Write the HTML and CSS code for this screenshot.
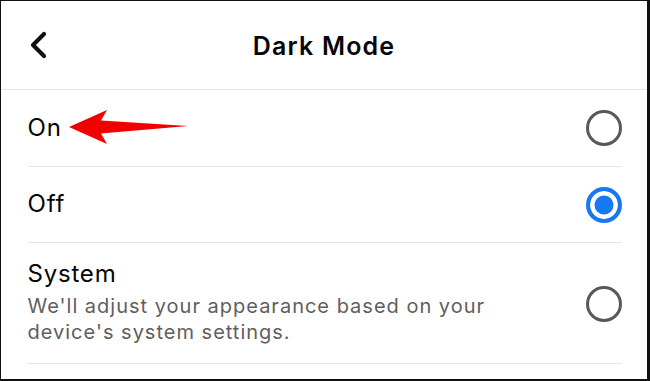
FILE: index.html
```html
<!DOCTYPE html>
<html>
<head>
<meta charset="utf-8">
<link rel="stylesheet" href="styles.css">
</head>
<body>
<div class="frame">
  <header class="header">
    <div class="back">
      <svg width="24" height="32" viewBox="0 0 24 32"><path d="M16 4 L5 15 L16 26" fill="none" stroke="#111" stroke-width="4.2" stroke-linecap="round" stroke-linejoin="round"/></svg>
    </div>
    <h1 class="title">Dark Mode</h1>
    <div></div>
  </header>
  <ul class="options">
    <li class="option">
      <div class="label"><span class="name">On</span></div>
      <span class="radio"></span>
      <svg class="arrow" width="124" height="36" viewBox="0 0 124 36"><polygon points="0,17 38,0 32,10.5 119,16 32,23.5 38,34" fill="#f20000"/></svg>
    </li>
    <li class="option">
      <div class="label"><span class="name">Off</span></div>
      <span class="radio checked"></span>
    </li>
    <li class="option tall">
      <div class="label">
        <span class="name">System</span>
        <span class="desc">We'll adjust your appearance based on your<br>device's system settings.</span>
      </div>
      <span class="radio"></span>
    </li>
  </ul>
</div>
</body>
</html>
```
FILE: styles.css
```css
* { box-sizing: border-box; }
html, body { margin: 0; padding: 0; background: #fff; }
body { font-family: Inter, "Noto Sans", "Liberation Sans", sans-serif; color: #050505; }
.frame {
  width: 650px;
  height: 381px;
  border: 1.5px solid #111;
  border-right-width: 3px;
  border-bottom-width: 2px;
  overflow: hidden;
}
.header {
  height: 89px;
  display: grid;
  grid-template-columns: 1fr auto 1fr;
  align-items: center;
  border-bottom: 1.5px solid #e6e6e6;
}
.back { padding-left: 27px; display: flex; align-items: center; }
.back svg { display: block; margin-top: 1px; }
.title {
  margin: 0;
  font-size: 25px;
  font-weight: 600;
  letter-spacing: 1.2px;
  margin-top: 1px;
}
.options { list-style: none; margin: 0; padding: 0 25px 0 26.5px; }
.option {
  position: relative;
  display: flex;
  align-items: center;
  justify-content: space-between;
  height: 76.5px;
  border-bottom: 1.5px solid #e4e4e4;
}
.option.tall { height: 121px; }
.label { display: flex; flex-direction: column; }
.name { font-size: 24px; font-weight: 400; line-height: 28px; letter-spacing: 0.8px; }
.tall .label { margin-top: -1px; }
.tall .name { margin-bottom: 5px; }
.desc { font-size: 20px; line-height: 26px; color: #5e5e60; letter-spacing: 1px; }
.radio {
  width: 36px;
  height: 36px;
  border-radius: 50%;
  border: 3px solid #585858;
  flex: none;
  margin-top: 1px;
}
.radio.checked {
  border: 4px solid #1877f2;
  background: #1877f2;
  box-shadow: inset 0 0 0 4.5px #fff;
}
.arrow { position: absolute; left: 41px; top: 20px; }
```
